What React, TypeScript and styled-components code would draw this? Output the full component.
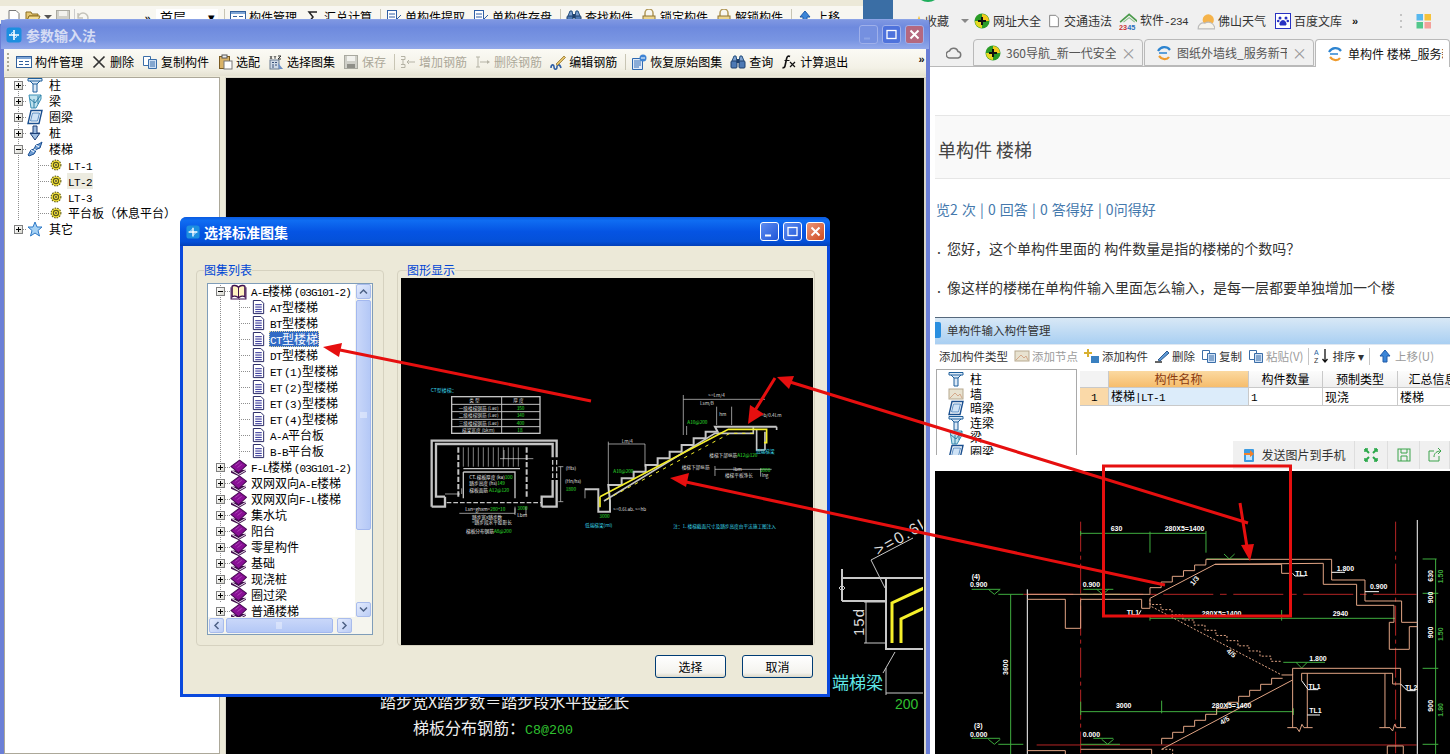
import React from "react";
import styled, { createGlobalStyle, css } from "styled-components";

const CJK = `"Noto Sans CJK SC","Liberation Sans",sans-serif`;
const Global = createGlobalStyle`
  html,body{margin:0;padding:0;width:1450px;height:754px;overflow:hidden;background:#3a6ea5;}
  body{font-family:${CJK};font-size:12px;line-height:16px;color:#000;}
  *{box-sizing:border-box;}
`;

const Desktop = styled.div`position:relative;width:1450px;height:754px;overflow:hidden;background:#3a6ea5;`;
const Lat = styled.span`font-family:"Liberation Mono",monospace;font-size:11px;letter-spacing:-.6px;word-spacing:-4px;`;
const mix = (t: string) => <span>{t.split(/([\x20-\x7e]+)/).filter(Boolean).map((p, i) => /[\x20-\x7e]/.test(p) ? <Lat key={i}>{p}</Lat> : <span key={i}>{p}</span>)}</span>;

/* ---------- icons ---------- */
const Svg = styled.svg`flex:none;display:block;`;
type IP = { s?: number };
const I = ({ s = 16, children }: IP & { children: React.ReactNode }) => <Svg width={s} height={s} viewBox="0 0 16 16" fill="none">{children}</Svg>;
const Logo = ({ s = 16 }: IP) => <I s={s}><rect x=".5" y=".5" width="15" height="15" rx="3" fill="#1c8fe0" /><path d="M8 3v10M3 8h10" stroke="#fff" strokeWidth="1.6" /><path d="M8 5a3 3 0 0 0-3 3M8 11a3 3 0 0 0 3-3" stroke="#bfe4ff" strokeWidth="1" /></I>;
const MgrIc = () => <I><rect x=".5" y="2.5" width="15" height="11" fill="#fff" stroke="#31609c" /><rect x="1" y="3" width="14" height="2" fill="#7fa6d6" /><path d="M3 7.5h4M3 10.5h4M9 7.5h4M9 10.5h4" stroke="#31609c" /></I>;
const XIc = () => <I><path d="M2.5 2.5l11 11M13.5 2.5l-11 11" stroke="#333" strokeWidth="1.7" /></I>;
const CopyIc = () => <I><path d="M1.5 2.5h7v9h-7z" fill="#fff" stroke="#3b6ea8" /><path d="M6.5 5.5h8v9h-8z" fill="#cfe0f5" stroke="#3b6ea8" /><path d="M8 8h5M8 10h5M8 12h5" stroke="#3b6ea8" /></I>;
const ClipIc = () => <I><rect x="2.5" y="2.5" width="10" height="12" fill="#d9b368" stroke="#7a5a20" /><rect x="5" y="1" width="5" height="3" fill="#eee" stroke="#555" /><rect x="7" y="7" width="8" height="8" fill="#fff" stroke="#777" /></I>;
const XyzIc = () => <I><rect x="2" y="6" width="9" height="9" fill="#cfd9e6" stroke="#66788f" /><path d="M4 8.5h2M7 8.5h2M4 11h2M7 11h2M4 13h2" stroke="#38507a" /><path d="M10 9l5 6h-4z" fill="#6b8fc7" /><path d="M10 2h3l-3 3h3" stroke="#333" strokeWidth="1" /><path d="M2 2l2 3M4 2l-2 3M6 2l1 1.5L8 2M7 3.500V5" stroke="#333" strokeWidth=".8" /></I>;
const SaveIc = ({ off }: { off?: boolean }) => <I><rect x="1.5" y="1.5" width="13" height="13" fill={off ? "#cfcfc8" : "#6f93c8"} stroke={off ? "#a9a9a0" : "#31609c"} /><rect x="4" y="2" width="8" height="5" fill="#f2f2ee" /><rect x="4" y="10" width="8" height="4" fill={off ? "#8f8f88" : "#334"} /></I>;
const AddBarIc = () => <I><path d="M1 2.5h4v3H1M1 10.5h4v3H1" stroke="#b5b3a5" /><path d="M3 5.5v5M7 8h8" stroke="#b5b3a5" /><path d="M9 6l-2 2 2 2" stroke="#b5b3a5" /></I>;
const DelBarIc = () => <I><path d="M1 3h4M1 13h4M3 3v10M5 8h8" stroke="#b5b3a5" /><path d="M12 6l3 2-3 2z" fill="#b5b3a5" /></I>;
const EditBarIc = () => <I><path d="M1 14c0-4 3-4 3-1s3 3 3 0 3-3 4 1" stroke="#2f5fa5" strokeWidth="1.6" /><path d="M6 10l8-8 1.5 1.5-8 8z" fill="#e4c26a" stroke="#8a6a20" strokeWidth=".7" /></I>;
const RestoreIc = () => <I><path d="M1.5 4.5h10v11h-10z" fill="#dfe9f7" stroke="#2f69b0" /><path d="M3 7h7M3 9h7M3 11h7M3 13h5" stroke="#3670b8" /><circle cx="12" cy="4" r="3.5" fill="#3f84d4" /><path d="M10 4h4" stroke="#fff" /></I>;
const BinIc = () => <I><path d="M2 7l2-5h2l1 5M14 7l-2-5h-2L9 7" fill="#7ea1d0" stroke="#25507f" /><rect x="1" y="7" width="6" height="7" rx="1" fill="#4d79b4" stroke="#1f406c" /><rect x="9" y="7" width="6" height="7" rx="1" fill="#4d79b4" stroke="#1f406c" /><rect x="6.5" y="5" width="3" height="4" fill="#1f406c" /></I>;
const FxIc = () => <I><path d="M9 2.5c-2-1-3 0-3.500 2.500l-1.500 7c-.3 1.500-1.500 2-2.500 1.500" stroke="#111" strokeWidth="1.6" /><path d="M3.500 6.500h5M9 8l5 5M14 8l-5 5" stroke="#111" strokeWidth="1.200" /></I>;
const ColIc = () => <I><path d="M1 1.500h14v2.500H1zM3 4l3 3h4l3-3M6 7v8h4V7" fill="#dbe9f7" stroke="#1e5f9b" /></I>;
const BeamIc = () => <I><path d="M2 2h12v4L9 15H4z" fill="#bfe2ee" stroke="#3a8fb5" /><path d="M3 6l5 4 6-8M7 6v9M11 3v8" stroke="#2f7fa5" /></I>;
const RingIc = () => <I><path d="M4 1.500h11l-3 13H1z" fill="#fff" stroke="#1a4f8f" strokeWidth="1.400" /><path d="M5.500 4h7l-2 8H3.500z" fill="#cfe3f6" stroke="#5d8fc4" /></I>;
const PileIc = () => <I><path d="M6 1h4v7h3l-5 7-5-7h3z" fill="#9dbce0" stroke="#1c3f78" /><path d="M3 8.500h10" stroke="#1c3f78" /></I>;
const StairIc = () => <I><path d="M1 14l3-5 3-1 2-4 3-1 3-2-2 6-3 1-3 5-5 2z" fill="#6f9ed4" stroke="#1b4f92" /><path d="M4 9l3 2M7 8l3 2M9 4l3 2" stroke="#fff" /></I>;
const GearIc = () => <I s={12}><circle cx="8" cy="8" r="6.500" fill="#f5e33a" stroke="#5c5a18" strokeWidth="1.500" strokeDasharray="2 1.500" /><circle cx="8" cy="8" r="3.500" fill="#f5e33a" stroke="#5c5a18" strokeWidth="1.500" /><circle cx="8" cy="8" r="1.200" fill="#444" /></I>;
const StarIc = () => <I><path d="M8 1l2 5h5l-4 3.500 1.500 5.500L8 12l-4.500 3L5 9.500 1 6h5z" fill="#a6d2f5" stroke="#2d78c6" /></I>;
const BookIc = () => <I s={17}><path d="M1 11v2l7 3 7-4v-2z" fill="#3c0a48" /><path d="M2 10.500l6 3.500 7-4v1l-7 4-6-3.500z" fill="#f1ecf4" /><path d="M1 7l8-6 6.500 5L8 13z" fill="#8a0f96" stroke="#480a55" /><path d="M5 6l4-3M7 8l4-3" stroke="#b04abb" strokeWidth=".8" /></I>;
const OpenBookIc = () => <I s={17}><path d="M8 4C6 2 3 2 2 3v10c1-1 4-1 6 1 2-2 5-2 6-1V3c-1-1-4-1-6 1z" fill="#fff2c0" stroke="#3e0f4d" strokeWidth="1.300" /><path d="M8 4v10" stroke="#3e0f4d" /><path d="M1 4v11h14V4" stroke="#3e0f4d" /></I>;
const DocIc = () => <I s={15}><path d="M2.500 .5h8l3 3v11h-11z" fill="#fff" stroke="#1b1b5c" /><path d="M4.500 5h7M4.500 7.500h7M4.500 10h7M4.500 12.500h7" stroke="#1b1b8c" /></I>;
const FolderIc = () => <I><path d="M1 5V3h5l1 2h6v2H4l-3 8z" fill="#e6c873" stroke="#8a6d20" /><path d="M4 7h11l-3 7H1z" fill="#f3dc91" stroke="#8a6d20" /></I>;
const PaperIc = ({ s = 16 }: IP) => <I s={s}><path d="M3 1.500h7l3 3v10H3z" fill="#fff" stroke="#777" /></I>;
const SigmaIc = () => <I><path d="M12 3H4l4 5-4 5h8" stroke="#222" strokeWidth="1.500" /></I>;
const ExtractIc = () => <I><rect x="1.500" y="1.500" width="9" height="13" fill="#fff" stroke="#2f5fa5" /><path d="M3 5h6M3 8h6M3 11h6M9 12l6-6" stroke="#2f5fa5" /></I>;
const LockIc = () => <I><path d="M4 7V4a4 4 0 0 1 8 0v3" stroke="#b29a5a" strokeWidth="1.500" /><rect x="2" y="7" width="12" height="7" fill="#ecd58e" stroke="#8e7534" /></I>;
const UpIc = () => <I><path d="M8 2l5 6h-3v6H6V8H3z" fill="#3c86d8" stroke="#1e5aa8" /></I>;
const UndoIc = () => <I><path d="M3 9a5 5 0 1 1 5 5M3 4v5h5" stroke="#c4c3ba" strokeWidth="1.500" /></I>;
const NetPlus = () => <I><circle cx="8" cy="8" r="7.500" fill="#2a9c26" /><path d="M8 1a7 7 0 0 1 7 7H8z" fill="#f4c91c" /><path d="M1 8a7 7 0 0 0 7 7V8z" fill="#e8d820" /><path d="M8 4v8M4 8h8" stroke="#111" strokeWidth="2" /></I>;
const HouseIc = () => <I s={18}><path d="M1 9l8-7 8 7" stroke="#4a9a4a" strokeWidth="1.500" /><path d="M4 9l5-4 5 4" stroke="#8abf8a" /><text x="0" y="16" fontSize="6.500" fontFamily="Liberation Sans" fontWeight="700" fill="#c83232">23<tspan fill="#2a6fbb">45</tspan></text></I>;
const SunIc = () => <I s={18}><circle cx="10" cy="7" r="5" fill="#f5b34a" /><path d="M1 15c0-4 3-6 6-5 3-2 8-1 9 5z" fill="#f6f4ec" stroke="#bbb" /></I>;
const PawIc = () => <I><rect x=".5" y=".5" width="15" height="15" fill="#fff" stroke="#2832c2" /><g fill="#2832c2"><circle cx="5" cy="5" r="1.500" /><circle cx="11" cy="5" r="1.500" /><circle cx="3.200" cy="8" r="1.300" /><circle cx="12.800" cy="8" r="1.300" /><path d="M8 7c2 0 4 3 3.500 4.500S9 12.500 8 12.500s-3 .5-3.500-1S6 7 8 7z" /></g></I>;
const AppsIc = () => <I><rect x="0.500" y="1" width="6.500" height="6.500" fill="#58b8ee" /><rect x="8.500" y="1" width="6.500" height="6.500" fill="#f5c23c" /><rect x="0.500" y="9" width="6.500" height="6.500" fill="#52c78b" /><rect x="8.500" y="9" width="6.500" height="6.500" fill="#f3a09a" /></I>;
const CloudIc = () => <I><path d="M4 13a3.500 3.500 0 0 1-.5-7A4.500 4.500 0 0 1 12 6.500 3.300 3.300 0 0 1 12 13z" stroke="#777" strokeWidth="1.500" /></I>;
const IeIc = () => <I><path d="M2 6c3-5 9-5 12-1" stroke="#2d84d0" strokeWidth="2.200" /><path d="M3 11c3 4 8 4 10 1" stroke="#ef9b2d" strokeWidth="2.200" /><path d="M3 8h8" stroke="#2d84d0" strokeWidth="1.500" /></I>;
const WallIc = () => <I><rect x="1" y="3" width="14" height="10" fill="#e8e2d0" stroke="#b7a98f" /><path d="M2 12l5-5 3 3 2-2 2 4" stroke="#d4a88a" /></I>;
const SendIc = () => <I><rect x="3" y="2" width="10" height="13" rx="1" fill="#3d9be0" /><rect x="5" y="7" width="6" height="6" fill="#bfe4ff" /><path d="M3 6h6V3l4 4-4 3V8H3z" fill="#f0812a" /></I>;
const ExpIc = () => <I><path d="M2 2l4 4M14 2l-4 4M2 14l4-4M14 14l-4-4" stroke="#2aa84a" strokeWidth="2" /><path d="M2 2h3M2 2v3M14 2h-3M14 2v3M2 14h3M2 14v-3M14 14h-3M14 14v-3" stroke="#2aa84a" strokeWidth="1.500" /></I>;
const GSaveIc = () => <I><rect x="2" y="2" width="12" height="12" stroke="#3aa34a" /><path d="M5 2v4h6V2M5 14v-5h6v5" stroke="#3aa34a" /></I>;
const ShareIc = () => <I><path d="M12 9v5H2V4h5" stroke="#3aa34a" /><path d="M7 10c0-4 3-6 7-6M11 1l3 3-3 3" stroke="#3aa34a" /></I>;
const PlusBookIc = () => <I><rect x="7" y="8" width="8" height="7" fill="#3a80c0" /><path d="M4 1v8M0 5h8" stroke="#d8b030" strokeWidth="2" /></I>;
const PenIc = () => <I><path d="M1 14h7" stroke="#333" strokeWidth="1.500" /><path d="M4 12l9-9 2 2-9 8z" fill="#5e9ad6" stroke="#2d5a90" /></I>;
const SortIc = () => <I><text x="0" y="7" fontSize="7" fontFamily="Liberation Sans" fill="#2a5f9e">A</text><text x="0" y="15" fontSize="7" fontFamily="Liberation Sans" fill="#333">Z</text><path d="M11 1v13M8.500 11l2.500 3 2.500-3" stroke="#111" strokeWidth="1.300" /></I>;

/* ---------- back app ---------- */
const BackApp = styled.div`position:absolute;left:0;top:0;width:863px;height:24px;background:#ece9d8;padding-top:6px;`;
const BackBar = styled.div`display:flex;align-items:center;height:18px;background:#f8f7f1;gap:8px;padding-top:3px;`;
const BackGroup = styled.div`display:flex;align-items:center;width:150px;flex:none;padding-left:6px;gap:3px;`;
const BackSelect = styled.div`display:flex;justify-content:space-between;width:62px;background:#fff;padding:0 3px 0 4px;flex:none;font-size:13px;margin:0 -2px 0 -2px;`;
const Sep = styled.i<{ $c?: string }>`display:block;flex:none;width:1px;height:16px;background:${p => p.$c || "#c8c5b4"};margin-right:-3px;`;
const Chevrons = styled.span`font:700 11px/10px "Liberation Sans",sans-serif;letter-spacing:-.5px;color:#111;`;
const PushRight = styled.span`margin-left:auto;`;
const SmallCaret = styled.i`display:block;flex:none;width:0;height:0;border:4px solid transparent;border-top:4px solid #555;margin-top:5px;`;

/* ---------- window chrome ---------- */
const MainWindow = styled.div`position:absolute;left:0;top:19px;width:930px;height:735px;background:#ece9d8;border-radius:8px 8px 0 0;border:solid #6b7fd6;border-width:1px 4px 0 4px;border-top-color:#8ba3e6;display:flex;flex-direction:column;`;
const TitleBar = styled.div<{ $active?: boolean }>`
  flex:none;display:flex;align-items:center;gap:4px;height:29px;margin:0 -3px;font-weight:700;font-size:14px;
  ${p => p.$active ? css`
    padding:0 5px 0 6px;color:#fff;border-radius:6px 6px 0 0;
    background:linear-gradient(#0a5ae0,#0f6df2 12%,#0554e3 50%,#0450d8 85%,#0340b8);
  ` : css`
    padding:0 5px 0 5px;color:#d5dcf4;
    background:linear-gradient(#7f97e2,#6e8ade 25%,#7995e2 70%,#93a9ea);
  `}
`;
const TitleText = styled.span`flex:1;`;
const TitleBtn = styled.span<{ $kind: string; $dim?: boolean }>`
  width:19px;height:19px;border-radius:3px;display:flex;align-items:center;justify-content:center;flex:none;
  border:1px solid ${p => p.$dim ? "#9fb0ea" : "#fff"};
  background:${p => p.$kind === "close" ? (p.$dim ? "#b4687f" : "linear-gradient(135deg,#e9967a,#d04a20)") : (p.$dim ? (p.$kind === "min" ? "#7590e0" : "#4e72dc") : "linear-gradient(135deg,#5d8df0,#1f55d8)")};
`;
const Glyph = ({ k, dim }: { k: string; dim?: boolean }) => {
  const c = dim && k === "min" ? "#8ba3e6" : "#fff";
  return <TitleBtn $kind={k} $dim={dim}><Svg width="13" height="13" viewBox="0 0 13 13" fill="none">
    {k === "min" && <path d="M2 10.500h6" stroke={c} strokeWidth="2" />}
    {k === "max" && <rect x="2" y="2.500" width="9" height="8" stroke={c} strokeWidth="1.300" />}
    {k === "close" && <path d="M2.500 2.500l8 8M10.500 2.500l-8 8" stroke={c} strokeWidth="2" />}
  </Svg></TitleBtn>;
};
const Toolbar = styled.div`flex:none;height:27px;display:flex;align-items:center;gap:8px;padding:0 0 2px 12px;background:linear-gradient(#fbfaf5,#f3f1e6 70%,#e5e2d2);position:relative;margin:0 0 1px;`;
const Grip = styled.i`position:absolute;left:3px;top:4px;bottom:4px;width:2px;background:repeating-linear-gradient(#a9a795 0 2px,transparent 2px 4px);`;
const ToolItem = styled.span<{ $off?: boolean }>`display:inline-flex;align-items:center;gap:3px;flex:none;color:${p => p.$off ? "#aca899" : "#000"};`;
const More = styled.span`position:absolute;right:2px;top:1px;`;
const MainBody = styled.div`flex:1;display:flex;min-height:0;gap:5px;`;
const TreePanel = styled.div`width:216px;background:#fff;border:1px solid #aca899;flex:none;overflow:hidden;& > :first-child{margin-top:-1px;}`;
const Canvas = styled.div`flex:1;min-width:0;background:#000;border:solid #d8d5c8;border-width:1px 2px 0 1px;overflow:hidden;`;
const FullSvg = styled.svg`display:block;`;

/* ---------- trees ---------- */
const dots = (x: number) => `linear-gradient(#8e8e8e 50%,transparent 50%) ${x}px 0/1px 2px repeat-y`;
const Row = styled.div<{ $guides?: number[]; $pad: number }>`
  height:16px;display:flex;align-items:center;white-space:nowrap;padding-left:${p => p.$pad}px;
  ${p => p.$guides && p.$guides.length ? `background:${p.$guides.map(dots).join(",")};` : ""}
`;
const Exp = styled.span`flex:none;width:9px;height:9px;border:1px solid #808080;background:linear-gradient(135deg,#fff,#d8d8d0);position:relative;
  &::before{content:"";position:absolute;left:1px;right:1px;top:3px;height:1px;background:#000;}
`;
const ExpPlus = styled(Exp)`&::after{content:"";position:absolute;top:1px;bottom:1px;left:3px;width:1px;background:#000;}`;
const Conn = styled.i<{ $w: number }>`flex:none;display:block;width:${p => p.$w}px;height:1px;background:repeating-linear-gradient(90deg,#8e8e8e 0 1px,transparent 1px 2px);`;
const Label = styled.span<{ $gap: number; $sel?: "soft" | "blue"; $tight?: boolean }>`
  margin-left:${p => p.$gap}px;padding:0 1px;height:16px;line-height:16px;
  ${p => p.$sel === "soft" && "background:#ecebe0;"}
  ${p => p.$sel === "blue" && "background:#316ac5;color:#fff;outline:1px dotted #d8d0a0;outline-offset:-1px;"}
  ${p => p.$tight && css`${Lat}{letter-spacing:-.9px;}`}
`;

const mainTree: [string, React.ReactNode][] = [["柱", <ColIc />], ["梁", <BeamIc />], ["圈梁", <RingIc />], ["桩", <PileIc />]];
const lts = ["LT-1", "LT-2", "LT-3", "平台板（休息平台）"];

const docs = ["AT型楼梯", "BT型楼梯", "CT型楼梯", "DT型楼梯", "ET (1)型楼梯", "ET (2)型楼梯", "ET (3)型楼梯", "ET (4)型楼梯", "A-A平台板", "B-B平台板"];
const books = ["F-L楼梯 (03G101-2)", "双网双向A-E楼梯", "双网双向F-L楼梯", "集水坑", "阳台", "零星构件", "基础", "现浇桩", "圈过梁", "普通楼梯"];

/* ---------- dialog ---------- */
const Dialog = styled.div`position:absolute;left:180px;top:217px;width:650px;height:480px;border:3px solid #0a49dd;border-top:0;border-radius:7px 7px 0 0;display:flex;flex-direction:column;background:#ece9d8;`;
const DialogBody = styled.div`flex:1;padding:17px 0 0 13px;display:flex;flex-direction:column;min-height:0;`;
const Groups = styled.div`display:flex;gap:13px;height:383px;flex:none;`;
const Group = styled.fieldset<{ $w: number; $pad: string }>`margin:0;min-width:0;width:${p => p.$w}px;height:383px;border:1px solid #d6d2c0;border-radius:4px;padding:${p => p.$pad};`;
const Legend = styled.legend<{ $ml: number }>`color:#0046d5;padding:0;margin-left:${p => p.$ml}px;line-height:14px;height:14px;font-size:12px;`;
const ListBox = styled.div`height:352px;border:1px solid #7f9db9;background:#fff;display:flex;flex-direction:column;`;
const ListTop = styled.div`flex:1;display:flex;min-height:0;`;
const ListScroll = styled.div`flex:1;overflow:hidden;min-width:0;& > :first-child{margin-top:-1px;}`;
const VBar = styled.div`width:17px;flex:none;background:#f5f5ee;display:flex;flex-direction:column;padding:0 1px;`;
const HBar = styled.div`height:17px;flex:none;background:#f5f5ee;display:flex;padding:1px 0 1px 1px;`;
const SBtn = styled.span`flex:none;width:15px;height:15px;border-radius:2px;display:flex;align-items:center;justify-content:center;background:linear-gradient(135deg,#e3ebfd,#bccdf5);border:1px solid #a9bcec;`;
const VThumb = styled.div`height:230px;margin-top:1px;border-radius:2px;background:linear-gradient(90deg,#c9d7f9,#b4c8f6);border:1px solid #a3b8ef;display:flex;align-items:center;justify-content:center;`;
const HThumb = styled.div`width:107px;margin-left:2px;border-radius:2px;background:linear-gradient(#c9d7f9,#b4c8f6);border:1px solid #a3b8ef;display:flex;align-items:center;justify-content:center;`;
const VSpace = styled.div`flex:1;`;
const HSpace = styled.div`width:4px;`;
const Preview = styled.div`width:412px;height:367px;background:#000;overflow:hidden;`;
const DialogFoot = styled.div`flex:none;display:flex;justify-content:flex-end;gap:16px;padding:9px 14px 0 0;`;
const Btn = styled.button`width:71px;height:23px;padding:0;border:1px solid #003c74;border-radius:3px;background:linear-gradient(#fff,#f4f3ee 80%,#dcd8c8);font:12px/16px ${CJK};color:#000;`;

/* ---------- browser ---------- */
const Browser = styled.div`position:absolute;left:893px;top:0;width:557px;height:754px;background:#fff;display:flex;flex-direction:column;`;
const TopStrip = styled.div`flex:none;height:9px;background:#f0f0f0;padding-left:22px;overflow:hidden;`;
const GreenDot = styled.i`display:block;width:26px;height:26px;border-radius:50%;background:#1fae5c;margin-top:-24px;`;
const Marks = styled.div`flex:none;height:24px;background:#f0f0f0;display:flex;align-items:center;padding-left:20px;color:#333;`;
const Mark = styled.span<{ $ml?: number }>`display:inline-flex;align-items:center;gap:3px;flex:none;margin-left:${p => p.$ml ?? 0}px;white-space:nowrap;`;
const Caret = styled.i`display:block;flex:none;width:0;height:0;border:4px solid transparent;border-top:4px solid #888;margin:4px 0 0 12px;`;
const Dots = styled.i`display:block;flex:none;width:2px;height:14px;margin-left:42px;background:repeating-linear-gradient(#c4c4c4 0 2px,transparent 2px 6px);`;
const Tabs = styled.div`flex:none;height:34px;background:#f0f0f0;display:flex;align-items:flex-end;padding-left:53px;border-bottom:1px solid #b9b9b9;`;
const CloudSlot = styled.span`flex:none;width:27px;height:27px;display:flex;align-items:center;`;
const Tab = styled.div<{ $on?: boolean }>`
  flex:none;width:${p => p.$on ? 135 : 170}px;height:${p => p.$on ? 28 : 27}px;margin-bottom:${p => p.$on ? -1 : 0}px;display:flex;align-items:center;gap:5px;padding:0 6px 0 11px;
  border:1px solid #b9b9b9;border-bottom:${p => p.$on ? "0" : "1px solid #b9b9b9"};border-radius:4px 4px 0 0;margin-right:1px;
  background:${p => p.$on ? "#fff" : "#f0f0f0"};color:${p => p.$on ? "#111" : "#555"};white-space:nowrap;overflow:hidden;
`;
const TabText = styled.span`flex:1;overflow:hidden;`;
const TabX = styled.span`flex:none;color:#999;font-size:15px;`;
const Content = styled.div`flex:1;min-height:0;padding-left:42px;display:flex;flex-direction:column;overflow:hidden;`;
const QTitle = styled.div`flex:none;margin-top:48px;height:64px;background:#f9f9f9;border:solid #e6e6e6;border-width:1px 0;display:flex;align-items:center;padding:3px 0 0 3px;font-size:18px;color:#444;`;
const Stats = styled.div`flex:none;margin-top:20px;height:20px;line-height:20px;padding-left:1px;font-size:14px;word-spacing:1px;color:#4579ad;white-space:nowrap;`;
const Para = styled.div<{ $mt: number }>`flex:none;margin-top:${p => p.$mt}px;height:20px;line-height:20px;font-size:14px;color:#333;white-space:nowrap;padding-left:2px;`;
const ParaDot = styled.span`display:inline-block;width:10px;`;

const Embed = styled.div`flex:none;margin-top:20px;position:relative;display:flex;flex-direction:column;height:154px;font-size:11.500px;`;
const ETitle = styled.div`flex:none;height:27px;border-top:1px solid #55687c;padding:0 0 3px 0;display:flex;align-items:center;gap:6px;background:linear-gradient(#d8e8f6,#a9cff2);color:#333;`;
const ETitleIcon = styled.i`flex:none;display:block;width:6px;height:16px;background:#2a8fe0;border-radius:0 2px 2px 0;`;
const EBar = styled.div`flex:none;height:25px;display:flex;align-items:center;gap:2px;padding:0 0 2px 4px;border-top:1px solid #dfe8f2;white-space:nowrap;`;
const EItem = styled.span<{ $off?: boolean; $ml?: number }>`flex:none;display:inline-flex;align-items:center;gap:2px;margin-left:${p => p.$ml ?? 4}px;color:${p => p.$off ? "#9b9b9b" : "#333"};`;
const ESep = styled.i`flex:none;display:block;width:1px;height:17px;background:#c5c5c5;margin:0 3px;`;
const EBody = styled.div`flex:none;display:flex;height:86px;overflow:hidden;`;
const ETree = styled.div`flex:none;width:141px;margin-left:1px;border:solid #a9a9a9;border-width:1px 1px 0 1px;padding-top:2px;overflow:hidden;`;
const ERow = styled.div`height:14.500px;display:flex;align-items:center;gap:6px;padding-left:11px;line-height:14px;font-size:12px;`;
const ETable = styled.div`flex:1;min-width:0;margin-left:3px;display:grid;grid-template-columns:29px 140px 74px 75px 70px;grid-template-rows:17px 18px;align-content:start;padding-top:2px;overflow:hidden;`;
const Cell = styled.div<{ $k?: string }>`
  border:solid #c9c9c9;border-width:0 1px 1px 0;display:flex;align-items:center;padding:0 2px;white-space:nowrap;font-size:12px;
  justify-content:${p => p.$k === "head" || p.$k === "hnum" || p.$k === "num" || p.$k === "hname" ? "center" : "flex-start"};
  background:${p => p.$k === "head" ? "linear-gradient(#fcfcfc,#efefef)" : p.$k === "hname" ? "linear-gradient(#fbd9a1,#f6bd6c)" : p.$k === "num" ? "#fad9a8" : p.$k === "sel" ? "#dcecfa" : p.$k === "hnum" ? "#f3f3f3" : "#fff"};
  ${p => (p.$k === "hname") && "color:#8a3a10;"}
`;
const EGap = styled.div`flex:1;`;
const FloatBar = styled.div`position:absolute;left:298px;top:124px;width:217px;height:28px;background:#f0f0f0;display:flex;align-items:center;font-size:12px;color:#333;`;
const FloatCell = styled.span<{ $w: number }>`flex:none;width:${p => p.$w}px;height:28px;display:flex;align-items:center;justify-content:center;gap:4px;border-right:1px solid #dedede;`;
const CadBox = styled.div`flex:1;min-height:0;background:#000;overflow:hidden;`;
const Overlay = styled.svg`position:absolute;left:0;top:0;pointer-events:none;`;

/* ---------- drawings ---------- */
const steps = (x0: number, y0: number, dx: number, dy: number, n: number) => {
  let s = `${x0},${y0}`, x = x0, y = y0;
  for (let i = 0; i < n; i++) { y += dy; s += ` ${x},${y}`; x += dx; s += ` ${x},${y}`; }
  return s;
};

const PreviewDraw = () => (
  <FullSvg width="412" height="367" viewBox="0 0 412 367">
    <g transform="translate(-1,92) scale(.3333)" fill="none" stroke="#c4c4c4" strokeWidth="3" fontFamily="Noto Sans CJK SC,sans-serif">
      <text x="92" y="66" fontSize="15" fill="#39d6e8" stroke="none">CT型楼梯：</text>
      <rect x="155" y="80" width="265" height="110" strokeWidth="4" />
      <path d="M155 103H420M155 125H420M155 148H420M155 170H420M305 80V190" />
      <g fontSize="14" stroke="none" fill="#d8d8d8">
        <text x="208" y="97">类 型</text><text x="340" y="97">厚 度</text>
        <text x="176" y="119">一级楼梯钢筋 (Lae)</text><text x="176" y="141">二级楼梯钢筋 (Lae)</text><text x="176" y="164">三级楼梯钢筋 (Lae)</text><text x="186" y="185">梯梁宽度 (bkm)</text>
        <g fill="#2fe02f"><text x="350" y="119">350</text><text x="350" y="141">340</text><text x="350" y="164">400</text><text x="352" y="185">18</text></g>
      </g>
      <path d="M135 380H108V222H458V262M95 410V212H470V262M135 380V410H95M425 410V380H458V330M470 330V410H425" strokeWidth="7" />
      <path d="M175 232V380M380 232V385" strokeWidth="6" strokeDasharray="16 6" />
      <path d="M140 398H425M458 270V325M470 270V325" strokeWidth="4" strokeDasharray="14 6" />
      <path d="M190 232V290M205 232V290M220 232V290M235 232V290M250 232V290M265 232V290M280 232V290M295 232V290M310 232V290M325 232V290M340 232V290M355 232V290" strokeWidth="2" />
      <path d="M190 296H360M190 306H345V385M190 306V385" strokeWidth="4" />
      <path d="M135 372H180M185 355v17M300 266H400M312 240V266" stroke="#ddd" strokeWidth="2" />
      <g fontSize="14" stroke="none" fill="#e8e8e8">
        <text x="208" y="328">CT. 梯板厚度 (ka)<tspan fill="#2fe02f">100</tspan></text>
        <text x="208" y="346">踏步高度 (hs)<tspan fill="#2fe02f">149</tspan></text>
        <text x="208" y="365">梯板面筋 <tspan fill="#2fe02f">A12@120</tspan></text>
        <text x="196" y="422">Lsn=ghxm=<tspan fill="#2fe02f">280*10</tspan></text>
        <text x="352" y="420" fill="#2fe02f">3000</text>
        <text x="352" y="440">Lbm</text>
        <text x="216" y="446">踏步宽x踏步数</text>
        <text x="216" y="462">=踏步段水平投影长</text>
        <text x="198" y="488">梯板分布钢筋<tspan fill="#2fe02f">A8@200</tspan></text>
        <text x="497" y="300">(Hts)</text><text x="495" y="338">(Hn/hs)</text>
        <text x="497" y="364" fill="#2fe02f">1800</text>
      </g>
      <path d="M178 430H345V415M345 410v25M378 410v25M482 290V395M475 290H490M475 395H490" strokeWidth="2" stroke="#ddd" />
      <polyline points={`555,358 595,358 595,425 630,425 630,392 625,345 665,345 ${steps(665, 345, 36, -20, 8)} 945,170 1130,170`} strokeWidth="6" />
      <path d="M612 393L945 190H1060V170M1070 180V240H1095M1130 170V180M1095 185V240" strokeWidth="5" />
      <path d="M600 380L985 178H1100V218H1092M600 380V412" stroke="#f5ef2a" strokeWidth="5" />
      <path d="M620 388L990 190H1060" stroke="#f5ef2a" strokeWidth="3" strokeDasharray="10 14" />
      <path d="M850 75V195M850 88H1095M950 110V165M995 110V165M625 215V370M625 222H735M735 222V290M555 355V385M945 288V318M945 298H1115M1082 295V320M860 168V195" stroke="#ddd" strokeWidth="2" />
      <g fontSize="14" stroke="none" fill="#ddd">
        <text x="925" y="82">&gt;=Lm/4</text><text x="900" y="104">Lsm/B</text><text x="958" y="137">hm</text><text x="665" y="218">Lm/4</text><text x="1075" y="140">&gt;=b/0.4Lm</text>
        <text x="928" y="260">楼梯下部纵筋<tspan fill="#2fe02f">A12@120</tspan></text><text x="845" y="297">楼梯下部纵筋</text><text x="1000" y="302">Ibm</text><text x="975" y="322">楼梯平板净长</text>
        <text x="640" y="422">&gt;=0.6Lab. &gt;=hb</text><text x="1085" y="322">Ing</text>
        <g fill="#2fe02f"><text x="862" y="162">A10@200</text><text x="640" y="310">A10@200</text><text x="1080" y="306">3000</text><text x="598" y="443">3000</text></g>
        <g fill="#39d6e8"><text x="1068" y="248">低端梯梁</text><text x="555" y="470">低端梯梁(ml)</text><text x="820" y="474">注：1. 楼梯截面尺寸及踏步高度由平法施工图注入</text></g>
      </g>
    </g>
  </FullSvg>
);

const MainCanvasDraw = () => (
  <FullSvg width="697" height="676" viewBox="226 78 697 676">
    <g fill="none" stroke="#c8c8c8" strokeWidth="2">
      <path d="M842 569V601M842 578H886M842 601H886M886 578H924M886 578V649H924" />
      <path d="M871 560L913 538M871 560L885 588M864 602H885M864 643H885M866 602V643M895 652L883 673M886 668V695M886 693H924" strokeWidth="1" />
      <path d="M892 643V603L924 588M901 643V619L924 608" stroke="#f5ef2a" strokeWidth="3" />
      <path d="M842 585l-3 3 3 3 3-3z" strokeWidth="1" />
    </g>
    <text transform="translate(878,556) rotate(-30)" fontFamily="Liberation Sans,sans-serif" fontSize="16" fill="#ddd" letterSpacing="2">&gt;=0.6lab</text>
    <text transform="translate(864,636) rotate(-90)" fontFamily="Liberation Sans,sans-serif" fontSize="15" fill="#ddd" letterSpacing="1">15d</text>
    <text x="832" y="689" fontFamily={CJK} fontSize="17" fill="#5fe8e8">端梯梁</text>
    <text x="895" y="709" fontFamily="Liberation Sans,sans-serif" fontSize="14" fill="#30c030">200</text>
    <text x="380" y="708" fontFamily={CJK} fontSize="16" fill="#eee">踏步宽X踏步数＝踏步段水平投影长</text>
    <path d="M584 709H616V697" stroke="#eee" fill="none" />
    <text x="413" y="734" fontFamily={CJK} fontSize="16" fill="#eee">梯板分布钢筋：</text>
    <text x="525" y="734" fontFamily="Liberation Mono,monospace" fontSize="13.300" fill="#30c030">C8@200</text>
  </FullSvg>
);

const CadDraw = () => (
  <FullSvg width="515" height="283" viewBox="0 0 515 283">
    <g transform="translate(-5,-11) scale(.3333)" fill="none" strokeWidth="3">
      <g stroke="#b52424">
        <path d="M452 185V880M1397 185V880" strokeDasharray="90 12 12 12" />
        <path d="M280 403H1460" strokeDasharray="150 20 20 20" />
        <path d="M320 855H1460" />
      </g>
      <g stroke="#3fae3f">
        <path d="M452 220H828M452 213V227M660 215V278M828 213V278" />
        <path d="M660 475H1395M660 465V482M1055 450V482M125 388H210M175 388l18 15 18-15M242 403V882M205 403H280" />
        <path d="M452 755H1090M452 725V765M695 722V760M860 745V765M1090 745V765" />
        <path d="M500 388l18 15 18-15M452 403H570M460 388H550M882 282l16 15 16-15M830 297H960M1098 607l17 17 17-17M1060 607H1185" />
        <path d="M1478 297H1520M1517 297V882M1478 400H1525M1478 625H1525M1478 853H1525" />
        <path d="M125 835H210M175 838l18 15 18-15M205 853H280M490 835H550M515 838l18 15 18-15M452 853H570" />
      </g>
      <g stroke="#fff"><path d="M292 388V882M1462 180V882" /></g>
      <g stroke="#e2a585">
        <path d="M292 403H660" />
        <polyline points={`660,403 ${steps(660, 400, 33.500, -17, 5)} 828,298 1205,298 1205,360 1305,360 1305,423 1415,423 1415,487 1462,487`} />
        <polyline points="855,313 1180,310 1180,373 1280,373 1280,436 1392,436 1392,487 1378,487 1378,568 1438,568 1438,500 1462,500" />
        <path d="M855 313L660 415M855 313H1055V340H1085" />
        <polyline points="292,418 406,418 406,505 452,505 452,418 635,418 635,445 660,445 660,415" />
        <polyline points="1088,625 1412,625 1412,802" />
        <polyline points="1115,662 1115,640 1388,640 1388,672 1412,672" />
        <path d="M1088 643V803M1132 640V803M1365 640V803M1072 803H1100l8 12 8-22 6 10H1148M1348 803H1380l8 10 6-20 6 10H1428" />
        <polyline points={steps(695, 853, 33, -18, 11)} />
        <path d="M695 868L1088 660M1055 645H1088V625" />
        <path d="M292 872H406V885M452 868H665V885M1372 882V858H1420V882" />
      </g>
      <g stroke="#e2a585" strokeDasharray="6 5">
        <polyline points={steps(660, 418, 33, 15.500, 12)} />
        <path d="M665 440L1055 645" />
        <path d="M695 868H728V885" />
      </g>
      <g stroke="#fff">
        <path d="M1088 340l7 8h30M1205 337h40M1305 395h42M1115 662l20 27h30M1132 765h38M1412 672l20 20h25M595 466h30l8-15" />
      </g>
      <g fontFamily="Liberation Sans,sans-serif" fontSize="21" fill="#fff" fontWeight="700">
        <text x="542" y="214">630</text><text x="704" y="214">280X5=1400</text>
        <text x="125" y="356">(4)</text><text x="120" y="382">0.900</text><text x="458" y="382">0.900</text>
        <text x="1096" y="347">TL1</text><text x="1220" y="334">1.800</text><text x="1320" y="388">0.900</text>
        <text x="590" y="465">TL1</text><text x="815" y="467">280X5=1400</text><text x="1208" y="467">2940</text>
        <text x="1138" y="604">1.800</text><text x="1135" y="688">TL1</text><text x="1138" y="760">TL1</text><text x="1425" y="689">TL2</text>
        <text x="558" y="745">3000</text><text x="845" y="745">280X5=1400</text>
        <text x="132" y="803">(3)</text><text x="120" y="831">0.000</text><text x="458" y="831">0.000</text>
        <text transform="translate(235,645) rotate(-90)">3600</text>
        <text transform="translate(790,378) rotate(-50)">1/3</text>
        <text transform="translate(888,575) rotate(40)">4/5</text>
        <text transform="translate(875,795) rotate(-30)">4/5</text>
        <text transform="translate(1508,365) rotate(-90)">630</text><text transform="translate(1508,430) rotate(-90)">900</text><text transform="translate(1508,535) rotate(-90)">900</text><text transform="translate(1508,755) rotate(-90)">900</text>
        <g fill="#3fae3f"><text transform="translate(1540,370) rotate(-90)">1.50</text><text transform="translate(1540,543) rotate(-90)">1.50</text><text transform="translate(1540,770) rotate(-90)">1.80</text></g>
      </g>
    </g>
  </FullSvg>
);

const Arrows = () => (
  <Overlay width="1450" height="754" viewBox="0 0 1450 754">
    <g fill="none" stroke="#e60f0f" strokeWidth="3">
      <path d="M591 401L340 350M1248 523L790 382M775 378L754 412M1165 585L686 482M1240 503L1247 547" />
      <rect x="1103.500" y="466" width="187" height="150" strokeWidth="3" />
    </g>
    <g fill="#e60f0f">
      <path d="M323 347L342 343L339 357Z" />
      <path d="M777 377L794 376L789 389Z" />
      <path d="M748 424L750 405L764 414Z" />
      <path d="M670 478L689 473L686 487Z" />
      <path d="M1250 561L1241 545L1254 544Z" />
    </g>
  </Overlay>
);

const UpDown = ({ d }: { d: string }) => <Svg width="9" height="7" viewBox="0 0 9 7" fill="none"><path d={d} stroke="#4d6185" strokeWidth="1.500" /></Svg>;
const Ticks = ({ v }: { v?: boolean }) => <Svg width="7" height="7" viewBox="0 0 7 7">
  <path d={v ? "M0 1h7M0 3h7M0 5h7" : "M1 0v7M3 0v7M5 0v7"} stroke="#eef3fe" /></Svg>;

export default function App() {
  return (
    <Desktop>
      <Global />
      <BackApp>
        <BackBar>
          <BackGroup>
            <PaperIc /><FolderIc /><SmallCaret /><SaveIc off />
            <Sep $c="#ccc" /><UndoIc />
            <PushRight><Chevrons>»</Chevrons></PushRight>
          </BackGroup>
          <BackSelect>首层<span>▾</span></BackSelect>
          <Sep />
          <ToolItem><MgrIc />构件管理</ToolItem>
          <ToolItem><SigmaIc />汇总计算</ToolItem>
          <Sep />
          <ToolItem><ExtractIc />单构件提取</ToolItem>
          <ToolItem><ExtractIc />单构件存盘</ToolItem>
          <Sep />
          <ToolItem><BinIc />查找构件</ToolItem>
          <ToolItem><LockIc />锁定构件</ToolItem>
          <ToolItem><LockIc />解锁构件</ToolItem>
          <Sep />
          <ToolItem><UpIc />上移</ToolItem>
        </BackBar>
      </BackApp>

      <Browser>
        <TopStrip><GreenDot /></TopStrip>
        <Marks>
          <Svg width="12" height="12" viewBox="0 0 16 16"><path d="M8 1l2 5h5l-4 3.500 1.500 5.500L8 12l-4.500 3L5 9.500 1 6h5z" fill="#f5c74a" /></Svg>
          <Mark>收藏</Mark><Caret />
          <Mark $ml={5}><NetPlus />网址大全</Mark>
          <Mark $ml={6}><PaperIc s={14} />交通违法</Mark>
          <Mark $ml={7}><HouseIc />{mix("软件-234")}</Mark>
          <Mark $ml={9}><SunIc />佛山天气</Mark>
          <Mark $ml={9}><PawIc />百度文库</Mark>
          <Mark $ml={10}><Chevrons>»</Chevrons></Mark>
          <Dots />
          <Mark $ml={14}><AppsIc /></Mark>
        </Marks>
        <Tabs>
          <CloudSlot><CloudIc /></CloudSlot>
          <Tab><NetPlus /><TabText>360导航_新一代安全上</TabText><TabX>×</TabX></Tab>
          <Tab><IeIc /><TabText>图纸外墙线_服务新干</TabText><TabX>×</TabX></Tab>
          <Tab $on><IeIc /><TabText>单构件 楼梯_服务新</TabText></Tab>
        </Tabs>
        <Content>
          <QTitle>单构件 楼梯</QTitle>
          <Stats>览2 次 | 0 回答 | 0 答得好 | 0问得好</Stats>
          <Para $mt={19}><ParaDot>.</ParaDot>您好，这个单构件里面的 构件数量是指的楼梯的个数吗？</Para>
          <Para $mt={19}><ParaDot>.</ParaDot>像这样的楼梯在单构件输入里面怎么输入，是每一层都要单独增加一个楼</Para>
          <Embed>
            <ETitle><ETitleIcon />单构件输入构件管理</ETitle>
            <EBar>
              <EItem $ml={0}>添加构件类型</EItem>
              <EItem $off $ml={4}><WallIc />添加节点</EItem>
              <EItem $ml={4}><PlusBookIc />添加构件</EItem>
              <EItem $ml={4}><PenIc />删除</EItem>
              <EItem $ml={4}><CopyIc />复制</EItem>
              <EItem $off $ml={4}><CopyIc />粘贴(V)</EItem>
              <ESep />
              <EItem $ml={0}><SortIc />排序 ▾</EItem>
              <ESep />
              <EItem $off $ml={2}><UpIc />上移(U)</EItem>
            </EBar>
            <EBody>
              <ETree>
                <ERow><ColIc />柱</ERow>
                <ERow><WallIc />墙</ERow>
                <ERow><RingIc />暗梁</ERow>
                <ERow><ColIc />连梁</ERow>
                <ERow><BeamIc />梁</ERow>
                <ERow><RingIc />圈梁</ERow>
              </ETree>
              <ETable>
                <Cell $k="hnum" /><Cell $k="hname">构件名称</Cell><Cell $k="head">构件数量</Cell><Cell $k="head">预制类型</Cell><Cell $k="head">汇总信息</Cell>
                <Cell $k="num">{mix("1")}</Cell><Cell $k="sel">{mix("楼梯|LT-1")}</Cell><Cell>{mix("1")}</Cell><Cell>现浇</Cell><Cell>楼梯</Cell>
              </ETable>
            </EBody>
            <EGap />
            <FloatBar>
              <FloatCell $w={122}><SendIc />发送图片到手机</FloatCell>
              <FloatCell $w={33}><ExpIc /></FloatCell>
              <FloatCell $w={32}><GSaveIc /></FloatCell>
              <FloatCell $w={30}><ShareIc /></FloatCell>
            </FloatBar>
          </Embed>
          <CadBox><CadDraw /></CadBox>
        </Content>
      </Browser>

      <MainWindow>
        <TitleBar>
          <Logo /><TitleText>参数输入法</TitleText>
          <Glyph k="min" dim /><Glyph k="max" dim /><Glyph k="close" dim />
        </TitleBar>
        <Toolbar>
          <Grip />
          <ToolItem><MgrIc />构件管理</ToolItem>
          <ToolItem><XIc />删除</ToolItem>
          <ToolItem><CopyIc />复制构件</ToolItem>
          <ToolItem><ClipIc />选配</ToolItem>
          <ToolItem><XyzIc />选择图集</ToolItem>
          <ToolItem $off><SaveIc off />保存</ToolItem>
          <Sep />
          <ToolItem $off><AddBarIc />增加钢筋</ToolItem>
          <ToolItem $off><DelBarIc />删除钢筋</ToolItem>
          <ToolItem><EditBarIc />编辑钢筋</ToolItem>
          <Sep />
          <ToolItem><RestoreIc />恢复原始图集</ToolItem>
          <ToolItem><BinIc />查询</ToolItem>
          <ToolItem><FxIc />计算退出</ToolItem>
          <More><Chevrons>»</Chevrons></More>
        </Toolbar>
        <MainBody>
          <TreePanel>
            {mainTree.map(([t, ic]) => (
              <Row key={t} $pad={9} $guides={[13]}><ExpPlus /><Conn $w={4} />{ic}<Label $gap={5}>{t}</Label></Row>
            ))}
            <Row $pad={9} $guides={[13]}><Exp /><Conn $w={4} /><StairIc /><Label $gap={5}>楼梯</Label></Row>
            {lts.map((t, i) => (
              <Row key={t} $pad={33} $guides={[13, 33]}><Conn $w={12} /><GearIc /><Label $gap={5} $sel={i === 1 ? "soft" : undefined}>{mix(t)}</Label></Row>
            ))}
            <Row $pad={9}><ExpPlus /><Conn $w={4} /><StarIc /><Label $gap={5}>其它</Label></Row>
          </TreePanel>
          <Canvas><MainCanvasDraw /></Canvas>
        </MainBody>
      </MainWindow>

      <Dialog>
        <TitleBar $active>
          <Logo s={14} /><TitleText>选择标准图集</TitleText>
          <Glyph k="min" /><Glyph k="max" /><Glyph k="close" />
        </TitleBar>
        <DialogBody>
          <Groups>
            <Group $w={188} $pad="6px 10px 9px 10px">
              <Legend $ml={-3}>图集列表</Legend>
              <ListBox>
                <ListTop>
                  <ListScroll>
                    <Row $pad={8} $guides={[12]}><Exp /><Conn $w={5} /><OpenBookIc /><Label $gap={3} $tight>{mix("A-E楼梯 (03G101-2)")}</Label></Row>
                    {docs.map((d, i) => (
                      <Row key={d} $pad={31} $guides={[12, 31]}><Conn $w={12} /><DocIc /><Label $gap={3} $sel={i === 2 ? "blue" : undefined}>{mix(d)}</Label></Row>
                    ))}
                    {books.map((b, i) => (
                      <Row key={b} $pad={8} $guides={i < books.length - 1 ? [12] : []}><ExpPlus /><Conn $w={5} /><BookIc /><Label $gap={3} $tight={i === 0}>{mix(b)}</Label></Row>
                    ))}
                  </ListScroll>
                  <VBar>
                    <SBtn><UpDown d="M1 5.500l3.500-3.500 3.500 3.500" /></SBtn>
                    <VThumb><Ticks v /></VThumb>
                    <VSpace />
                    <SBtn><UpDown d="M1 1.500l3.500 3.500 3.500-3.500" /></SBtn>
                  </VBar>
                </ListTop>
                <HBar>
                  <SBtn><Svg width="7" height="9" viewBox="0 0 7 9" fill="none"><path d="M5.500 1L2 4.500 5.500 8" stroke="#4d6185" strokeWidth="1.500" /></Svg></SBtn>
                  <HThumb><Ticks /></HThumb>
                  <HSpace />
                  <SBtn><Svg width="7" height="9" viewBox="0 0 7 9" fill="none"><path d="M1.500 1L5 4.500 1.500 8" stroke="#4d6185" strokeWidth="1.500" /></Svg></SBtn>
                </HBar>
              </ListBox>
            </Group>
            <Group $w={418} $pad="1px 1px 0 3px">
              <Legend $ml={6}>图形显示</Legend>
              <Preview><PreviewDraw /></Preview>
            </Group>
          </Groups>
          <DialogFoot>
            <Btn>选择</Btn>
            <Btn>取消</Btn>
          </DialogFoot>
        </DialogBody>
      </Dialog>
      <Arrows />
    </Desktop>
  );
}
